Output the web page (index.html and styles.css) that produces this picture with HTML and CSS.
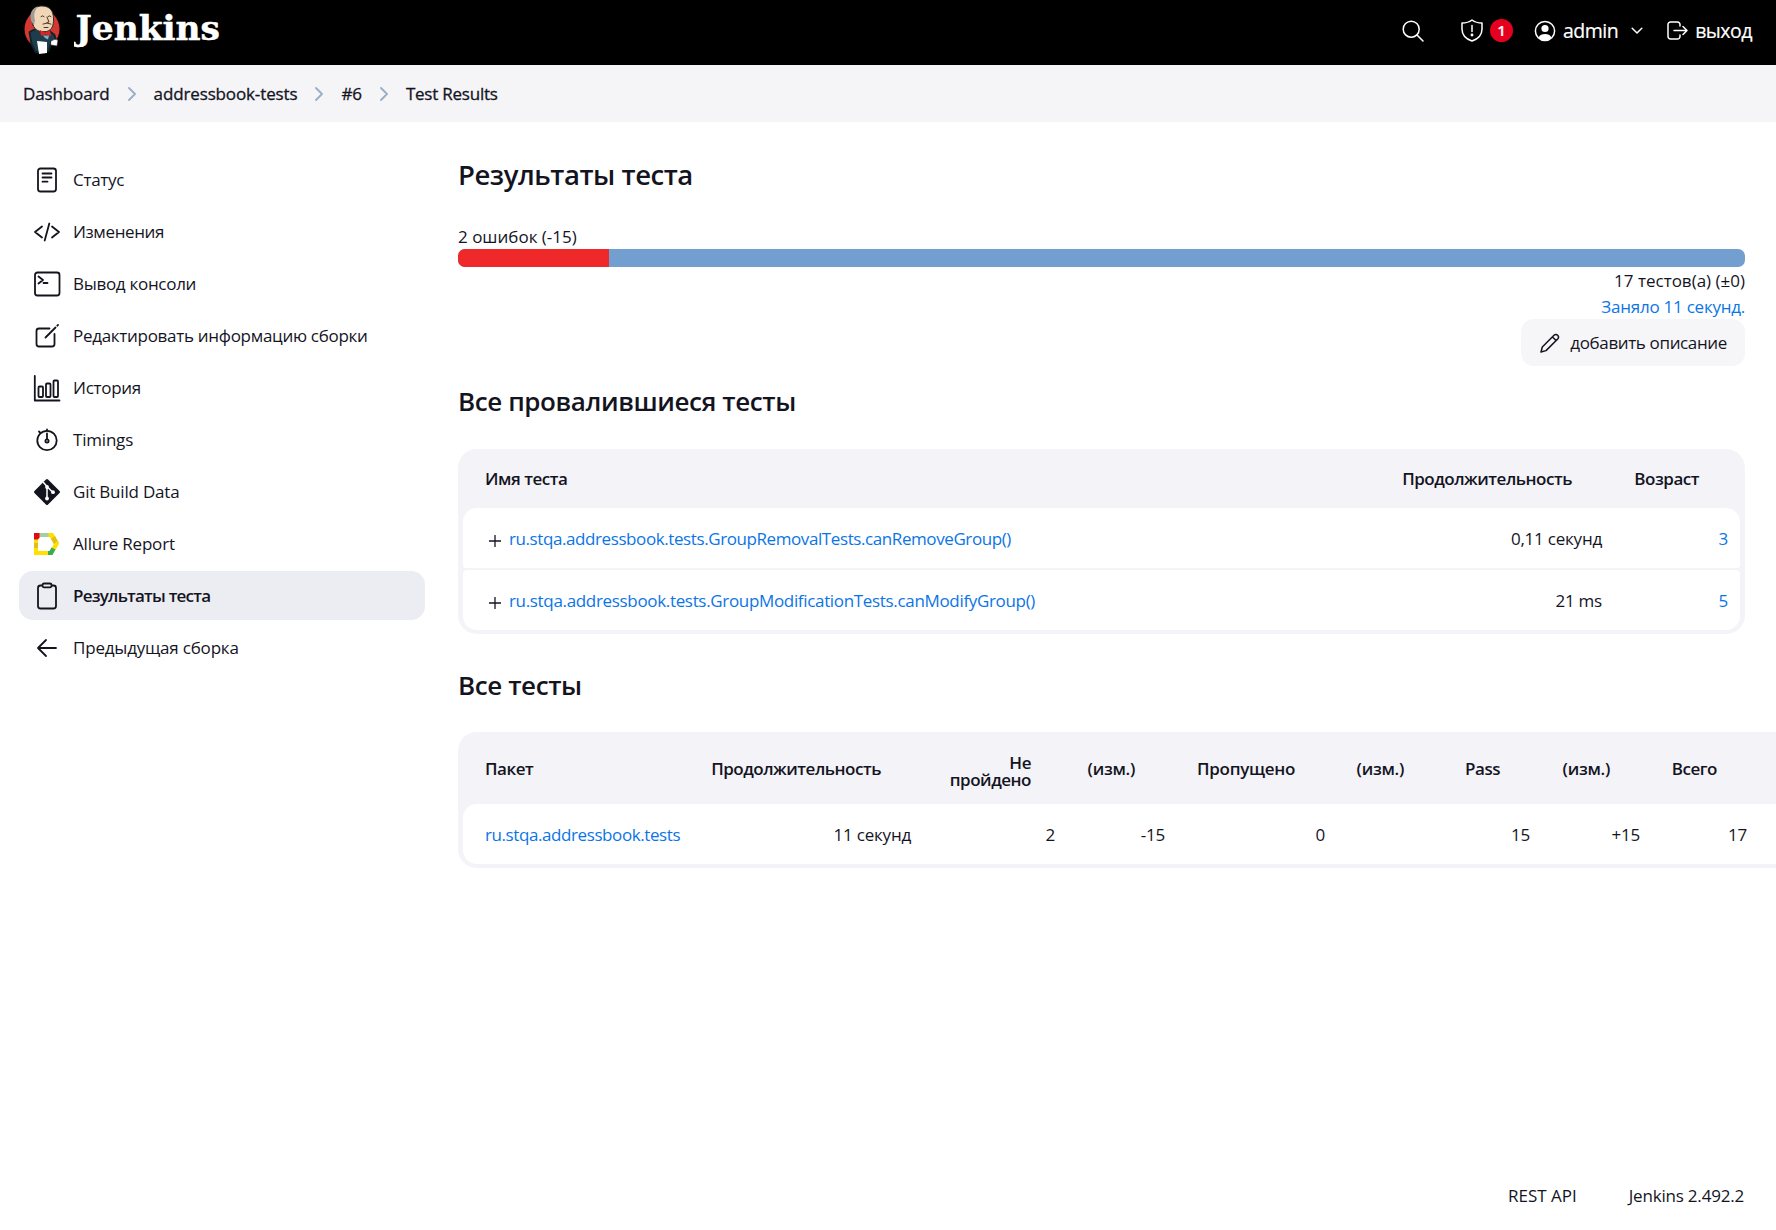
FILE: index.html
```html
<!DOCTYPE html>
<html lang="ru">
<head>
<meta charset="utf-8">
<title>Результаты теста - Jenkins</title>
<link rel="stylesheet" href="styles.css">
</head>
<body>
<header class="header">
  <a class="brand" href="#">
    <svg class="brand-logo" width="36" height="50" viewBox="0 0 36 50">
      <ellipse cx="18" cy="24" rx="17.500" ry="19" fill="#d33833"/>
      <path d="M5.500 27l8-4 12 3 5 4 2 7-6 3-2 6-13 1-4-8z" fill="#1d3c4c" stroke="#10222b"/>
      <path d="M9 20C4 8 10 1 18 1c8 0 11.500 5 11.500 13 0 6-1 11-7 12.500-7 1-12-1.500-13.500-6.500z" fill="#f0d6b7" stroke="#332b26" stroke-width="1"/>
      <path d="M7.500 17C4 9 9 2 14 1.500 10.500 5 9.500 10 11 15l-1 5z" fill="#a09b94"/>
      <path d="M17 11.500q1.500-1.500 3 0M24 11.500q1.500-1.500 3 0M23 12l2 5-2 .5M19 19q4-2 8 0M20 22.500h4" fill="none" stroke="#4a372c" stroke-width="1"/>
      <path d="M16 25l5 2.500 5-2 1 5.500-5-1.500-5 1.500z" fill="#e0231f"/>
      <path d="M19 30.500l6 0-1 4-3-1.500z" fill="#81b0c4"/>
      <path d="M13 36l10 1 0 11-8 1z" fill="#fff"/>
      <path d="M27 36q4-3 7-1l-1 6-6-1z" fill="#fff" stroke="#222" stroke-width=".6"/>
    </svg>
    <svg class="brand-name" width="147" height="40" viewBox="0 0 147 40"><text x="1.500" y="31" textLength="144.500" lengthAdjust="spacingAndGlyphs">Jenkins</text></svg>
  </a>
  <nav class="header-nav">
    <svg class="i-search" width="22" height="22" viewBox="0 0 22 22"><circle cx="9.200" cy="9.200" r="8"/><path d="M15 15l6 6"/></svg>
    <a class="alert" href="#">
      <svg width="22" height="23" viewBox="0 0 22 23"><path d="M11 1c3 2.300 6.500 3 10 3v6c0 6-4 10-10 12C5 20 1 16 1 10V4c3.500 0 7-.7 10-3zM11 6.500v6"/><circle cx="11" cy="16" r=".7"/></svg>
      <span class="badge">1</span>
    </a>
    <a class="user" href="#">
      <svg width="22" height="22" viewBox="0 0 22 22"><circle cx="11" cy="11" r="9.600"/><circle class="solid" cx="11" cy="8.500" r="3.600"/><path class="solid" d="M4.500 17.500C6 14.500 8 14 11 14s5 .5 6.500 3.500c-1.500 2-4 3-6.500 3s-5-1-6.500-3z"/></svg>
      <span class="user-name">admin</span>
      <svg class="i-down" width="12" height="8" viewBox="0 0 12 8"><path d="M1.200 1.200L6 6l4.800-4.800"/></svg>
    </a>
    <a class="logout" href="#">
      <svg width="21" height="20" viewBox="0 0 21 20"><path d="M13 5V3.500A2.500 2.500 0 0 0 10.500 1h-7A2.500 2.500 0 0 0 1 3.500v12A2.500 2.500 0 0 0 3.500 18h7a2.500 2.500 0 0 0 2.500-2.500V14M7 9.500h13M16 5.500l4 4-4 4"/></svg>
      <span>выход</span>
    </a>
  </nav>
</header>

<nav class="crumbs">
  <a href="#">Dashboard</a>
  <svg width="8" height="14" viewBox="0 0 8 14"><path d="M1 1l6 6-6 6"/></svg>
  <a href="#">addressbook-tests</a>
  <svg width="8" height="14" viewBox="0 0 8 14"><path d="M1 1l6 6-6 6"/></svg>
  <a href="#">#6</a>
  <svg width="8" height="14" viewBox="0 0 8 14"><path d="M1 1l6 6-6 6"/></svg>
  <a class="current" href="#">Test Results</a>
</nav>

<div class="page">
  <aside class="side">
    <a href="#"><svg width="28" height="28" viewBox="0 0 28 28"><rect x="5" y="2.500" width="18" height="23" rx="2.500"/><path d="M9.500 7.500h9M9.500 11.500h9M9.500 15.700h5"/></svg><span>Статус</span></a>
    <a href="#"><svg width="28" height="28" viewBox="0 0 28 28"><path d="M9 8.500L2 14l7 5.500M19 8.500l7 5.500-7 5.500M16.300 5.500l-4.600 17"/></svg><span class="snug">Изменения</span></a>
    <a href="#"><svg width="28" height="28" viewBox="0 0 28 28"><rect x="2" y="2.500" width="24.500" height="23" rx="2.500"/><path d="M5.500 6.500l4.500 3.500-4.500 3.500M10.500 13h4"/></svg><span>Вывод консоли</span></a>
    <a href="#"><svg width="28" height="28" viewBox="0 0 28 28"><path d="M16.500 6.500H6A2.500 2.500 0 0 0 3.500 9v13A2.500 2.500 0 0 0 6 24.500h13a2.500 2.500 0 0 0 2.500-2.500V12M12.500 15.500L22.500 5.500M24.300 3.700l.7-.7"/></svg><span>Редактировать информацию сборки</span></a>
    <a href="#"><svg width="28" height="28" viewBox="0 0 28 28"><path d="M1.800 2v24.500H26.500"/><rect x="5.500" y="12.500" width="4.500" height="10.500" rx="1"/><rect x="13" y="9.500" width="4.500" height="13.500" rx="1"/><rect x="20.500" y="6.500" width="4.500" height="16.500" rx="1"/></svg><span>История</span></a>
    <a href="#"><svg width="28" height="28" viewBox="0 0 28 28"><circle cx="14" cy="14.500" r="9.700"/><circle cx="14" cy="15" r="1.600"/><path d="M14 13V7.500M14 4.500V3.500M7 6.500L6 5.500"/></svg><span class="latin">Timings</span></a>
    <a href="#"><svg class="git" width="28" height="28" viewBox="0 0 28 28"><path class="git-body" d="M14 2.500L25.500 14 14 25.500 2.500 14z"/><path class="git-line" d="M10.500 4.500L14 8.500v12M14 8.500l6 6"/><circle cx="14" cy="9" r="1.900"/><circle cx="20" cy="14.200" r="1.900"/><circle cx="14" cy="20.500" r="1.900"/></svg><span class="latin">Git Build Data</span></a>
    <a href="#"><svg class="allure" width="28" height="28" viewBox="0 0 28 28"><path fill="#ffe000" d="M1 8h4v13h11v4H1z"/><path fill="#dfc016" d="M1 13h4v5H1z"/><path fill="#e30613" d="M1 3h6v4L5 9.500H1z"/><path fill="#a5cfa0" d="M6.500 3H16v4H6.500z"/><path fill="#ffe000" d="M15.500 3H20l2.500 4-4 2.500-2-2.500h-1z"/><path fill="#dfc016" d="M22 6l4 7-5 1.500-3-5.500z"/><path fill="#ffe000" d="M24.500 11L26 14l-3.500 6-4-2 2.500-4z"/><path fill="#3cac4c" d="M18.500 17.500l4 2-3 5.500H15v-4h1.500z"/></svg><span class="latin">Allure Report</span></a>
    <a class="active" href="#"><svg width="28" height="28" viewBox="0 0 28 28"><rect x="5" y="3.500" width="18" height="23" rx="2.500"/><rect class="clip" x="9.500" y="1.500" width="9" height="3.800" rx="1.500"/></svg><span>Результаты теста</span></a>
    <a href="#"><svg width="28" height="28" viewBox="0 0 28 28"><path d="M13 6l-8 8 8 8M5.500 14H23"/></svg><span class="latin">Предыдущая сборка</span></a>
  </aside>

  <main class="main">
    <h1>Результаты теста</h1>
    <div class="failures">2 ошибок (-15)</div>
    <div class="bar"><div class="bar-fail" style="width:11.760%"></div></div>
    <div class="summary">
      <span>17 тестов(а) (±0)</span>
      <a class="took" href="#">Заняло 11 секунд.</a>
      <a class="describe" href="#"><svg width="20" height="20" viewBox="0 0 20 20"><path d="M1 19l1.300-5L14 2.200c2.500-2.500 6 1.300 3.700 3.700L6 17.600zM12.500 4l3.500 3.500"/></svg><span>добавить описание</span></a>
    </div>

    <h2 class="first">Все провалившиеся тесты</h2>
    <table class="grid failed">
      <colgroup><col class="w-name"><col class="w-dur"><col class="w-age"></colgroup>
      <thead><tr><th>Имя теста</th><th>Продолжительность</th><th>Возраст</th></tr></thead>
      <tbody>
        <tr><td><svg class="plus" width="12" height="12" viewBox="0 0 12 12"><path d="M6 0v12M0 6h12"/></svg><a href="#">ru.stqa.addressbook.tests.GroupRemovalTests.canRemoveGroup()</a></td><td>0,11 секунд</td><td><a href="#">3</a></td></tr>
        <tr><td><svg class="plus" width="12" height="12" viewBox="0 0 12 12"><path d="M6 0v12M0 6h12"/></svg><a class="wide" href="#">ru.stqa.addressbook.tests.GroupModificationTests.canModifyGroup()</a></td><td>21 ms</td><td><a href="#">5</a></td></tr>
      </tbody>
    </table>

    <h2>Все тесты</h2>
    <table class="grid all">
      <colgroup><col style="width:227px"><col style="width:237px"><col style="width:144px"><col style="width:110px"><col style="width:160px"><col style="width:109px"><col style="width:96px"><col style="width:110px"><col style="width:107px"><col style="width:50px"></colgroup>
      <thead><tr><th>Пакет</th><th>Продолжительность</th><th class="wrap">Не<br>пройдено</th><th class="diff">(изм.)</th><th class="diff">Пропущено</th><th class="diff">(изм.)</th><th>Pass</th><th class="diff">(изм.)</th><th>Всего</th><th></th></tr></thead>
      <tbody><tr><td><a href="#">ru.stqa.addressbook.tests</a></td><td>11 секунд</td><td>2</td><td>-15</td><td>0</td><td></td><td>15</td><td>+15</td><td>17</td><td></td></tr></tbody>
    </table>
  </main>
</div>

<footer class="footer"><a href="#">REST API</a><a class="version" href="#">Jenkins 2.492.2</a></footer>
</body>
</html>
```
FILE: styles.css
```css
* { box-sizing: border-box; }
body {
  margin: 0;
  min-height: 1230px;
  display: flex;
  flex-direction: column;
  overflow: hidden;
  background: #fff;
  color: #14141f;
  font: 17px/26px "Open Sans", "Noto Sans", sans-serif;
}
a { color: inherit; text-decoration: none; }
svg { fill: none; stroke: currentColor; stroke-width: 1.8; stroke-linecap: round; stroke-linejoin: round; flex: none; }

.header { height: 65px; background: #000; color: #fff; display: flex; align-items: flex-start; justify-content: space-between; padding: 0 24px; }
.brand { display: flex; gap: 14px; }
.brand-logo { stroke: none; margin-top: 5px; }
.brand-name { margin-top: 9px; }
.brand-name text { font: bold 33px "DejaVu Serif", serif; fill: #fff; stroke: #fff; stroke-width: .5; }
.header-nav { height: 61px; display: flex; align-items: center; font-size: 19.5px; font-weight: 500; letter-spacing: -.5px; -webkit-text-stroke: .2px; }
.header-nav svg { stroke-width: 1.5; }
.header-nav a { display: flex; align-items: center; }
.header-nav .i-search { margin-right: 37px; }
.alert { gap: 7px; margin-right: 21px; }
.badge { width: 23px; height: 23px; border-radius: 50%; background: #e6001f; font-size: 15px; font-weight: 600; line-height: 23px; text-align: center; letter-spacing: 0; }
.user { gap: 7px; margin-right: 24px; }
.user .i-down { margin-left: 6px; }
.header-nav .solid { fill: #fff; stroke: none; }
.logout { gap: 7px; }

.crumbs { height: 57px; background: #f5f5f8; display: flex; align-items: center; padding: 0 23px; font-weight: 500; letter-spacing: -.13px; -webkit-text-stroke: .3px; }
.crumbs .current { letter-spacing: -.22px; }
.crumbs svg { color: #98aec6; margin: 0 18px; }

.page { display: flex; padding: 33px 0 0 19px; }
.side { width: 406px; display: flex; flex-direction: column; gap: 3px; letter-spacing: -.29px; }
.side a { height: 49px; display: flex; align-items: center; gap: 12px; padding-left: 14px; border-radius: 14px; }
.side .snug { letter-spacing: -.38px; }
.side .latin { letter-spacing: -.2px; }
.side .active { background: #ecedf3; font-weight: 600; letter-spacing: -.78px; }
.clip { fill: #ecedf3; }
.git-body { fill: #14141f; stroke-width: 3; }
.git-line { stroke: #fff; stroke-width: 1.5; }
.git circle { fill: #fff; stroke: none; }
.allure { stroke: none; }

.main { width: 1287px; margin-left: 33px; }
h1 { margin: 0; height: 69px; padding-top: 2px; font-size: 27.5px; line-height: 36px; font-weight: 600; letter-spacing: -.46px; }
.failures { height: 25px; line-height: 26px; }
.bar { height: 18px; border-radius: 7px; overflow: hidden; background: #729fcf; }
.bar-fail { height: 100%; background: #ef2929; }
.summary { display: flex; flex-direction: column; align-items: flex-end; padding-top: 1px; }
.took { line-height: 25px; letter-spacing: -.24px; }
.took, td a { color: #0b75e6; }
.describe { width: 224px; height: 47px; display: flex; align-items: center; justify-content: space-between; padding: 0 18px 0 19px; border-radius: 13px; background: #f6f6f9; letter-spacing: -.36px; }
.describe svg { stroke-width: 1.5; }
h2 { margin: 33px 0 29px; font-size: 26px; line-height: 36px; font-weight: 600; letter-spacing: -.4px; }
h2.first { margin: 17px 0 30px; }

.grid { table-layout: fixed; border-collapse: separate; border-spacing: 0; background: #f3f3f8; border-radius: 19px; padding: 0 5px 4px; }
.grid th { height: 59px; padding: 0 46px 0 0; text-align: right; font-weight: 600; white-space: nowrap; vertical-align: middle; letter-spacing: -.47px; }
.grid th.diff { letter-spacing: -.3px; }
.grid td { height: 60px; padding: 1px 16px 0 0; text-align: right; background: #fff; white-space: nowrap; letter-spacing: -.22px; }
.grid th:first-child, .grid td:first-child { text-align: left; padding-left: 22px; }
.grid td:first-child { letter-spacing: -.41px; }
.grid .wide { letter-spacing: -.33px; }
.failed { width: 1287px; }
.failed td { height: 62px; border-bottom: 2px solid #f3f3f8; }
.failed tr:last-child td { height: 60px; border-bottom: 0; }
.failed td:last-child { padding-right: 12px; }
.failed th:last-child { padding-right: 41px; }
.w-dur { width: 240px; }
.w-age { width: 122px; }
tbody tr td:first-child { border-radius: 4px 0 0 4px; }
tbody tr td:last-child { border-radius: 0 4px 4px 0; }
tbody tr:first-child td:first-child { border-top-left-radius: 14px; }
tbody tr:first-child td:last-child { border-top-right-radius: 14px; }
tbody tr:last-child td:first-child { border-bottom-left-radius: 14px; }
tbody tr:last-child td:last-child { border-bottom-right-radius: 14px; }
.plus { margin: 0 8px -2px 4px; stroke-width: 1.3; stroke-linecap: butt; }
.all { width: 1360px; }
.all th { height: 72px; padding-top: 2px; }
.all th.wrap { padding-top: 5px; padding-right: 40px; line-height: 17px; }

.footer { margin-top: auto; padding: 0 32px 21px 0; display: flex; justify-content: flex-end; gap: 52px; }
.version { letter-spacing: -.2px; }
```
